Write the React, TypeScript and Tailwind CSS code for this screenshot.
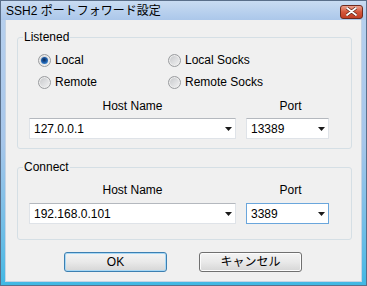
import React from 'react';

const font = "font-['Liberation_Sans','Noto_Sans_CJK_JP',sans-serif]";

const Radio: React.FC<{ label: string; checked?: boolean }> = ({ label, checked }) => (
  <div className="flex items-center h-[16px] gap-[4px]">
    <span className="w-[13px] h-[13px] rounded-full border border-[#9a9c9f] bg-gradient-to-br from-[#c4c6c8] via-[#dcdddf] to-[#f3f3f3] shadow-[inset_0_0_0_1px_#eeeeee] flex items-center justify-center">
      {checked && (
        <span className="w-[7px] h-[7px] rounded-full bg-[radial-gradient(circle_at_45%_40%,#0c2a52_0%,#1c5aa8_45%,#4aa2e8_100%)]" />
      )}
    </span>
    <span className="text-[12px] leading-[14px] text-black">{label}</span>
  </div>
);

const Arrow = () => (
  <svg width="7" height="4" viewBox="0 0 7 4" className="shrink-0">
    <path d="M0 0H7L3.5 4Z" fill="#1a1a1a" />
  </svg>
);

const Combo: React.FC<{ value: string; width: string; focused?: boolean }> = ({ value, width, focused }) => (
  <div
    className={`${width} h-[21px] flex items-center justify-between bg-white pl-[4px] pr-[3px] border ${
      focused ? 'border-[#6aa6dc]' : 'border-[#dfe3e8] border-t-[#b4b8be]'
    }`}
  >
    <span className="text-[12px] leading-[14px] text-black">{value}</span>
    <Arrow />
  </div>
);

const HostRow: React.FC<{ host: string; port: string; portFocused?: boolean }> = ({ host, port, portFocused }) => (
  <>
    <div className="flex pl-[11px] gap-[11px]">
      <div className="w-[207px] text-center text-[12px] leading-[14px]">Host Name</div>
      <div className="w-[83px] pl-[4px] text-center text-[12px] leading-[14px]">Port</div>
    </div>
    <div className="flex pl-[11px] gap-[10px]">
      <Combo value={host} width="w-[207px]" />
      <Combo value={port} width="w-[83px]" focused={portFocused} />
    </div>
  </>
);

export default function App() {
  return (
    <div
      className={`${font} w-[367px] h-[286px] flex flex-col border border-[#5a6f8a] bg-gradient-to-b from-[#b9d1ee] via-[#a6c6ea] to-[#3fb8e4] text-black`}
    >
      {/* Title bar */}
      <div className="h-[19px] flex items-center justify-between pl-[5px] pr-[3px] bg-gradient-to-b from-[#c9dcf2] to-[#abc7ea]">
        <span className="text-[12px] leading-[14px] mt-[1px]">SSH2 ポートフォワード設定</span>
        <div className="w-[23px] h-[14px] mt-[2px] rounded-[3px] border border-[#6e2a1e] bg-gradient-to-b from-[#eba08c] via-[#d4553a] to-[#c03f26] flex items-center justify-center">
          <svg width="11" height="9" viewBox="0 0 11 9">
            <path d="M1 1L10 8M10 1L1 8" stroke="#5a2015" strokeWidth="3.2" strokeLinecap="round" />
            <path d="M1 1L10 8M10 1L1 8" stroke="#ffffff" strokeWidth="1.8" strokeLinecap="round" />
          </svg>
        </div>
      </div>

      {/* Client area */}
      <div className="flex-1 mx-[4px] mb-[3px] bg-[#f0f0f0] border-l border-r border-b border-[#c5d3e3] flex flex-col">
        <fieldset className="mt-[10px] ml-[11px] w-[335px] border border-[#d5dfe5] rounded-[3px] pb-[9px]">
          <legend className="ml-[5px] px-[1px] text-[12px] leading-[14px]">Listened</legend>
          <div className="grid grid-cols-[130px_130px] pl-[20px] mt-[8px] gap-y-[6px]">
            <Radio label="Local" checked />
            <Radio label="Local Socks" />
            <Radio label="Remote" />
            <Radio label="Remote Socks" />
          </div>
          <div className="mt-[9px] flex flex-col gap-[5px]">
            <HostRow host="127.0.0.1" port="13389" />
          </div>
        </fieldset>

        <fieldset className="mt-[11px] ml-[11px] w-[335px] border border-[#d5dfe5] rounded-[3px] pb-[15px]">
          <legend className="ml-[5px] px-[1px] text-[12px] leading-[14px]">Connect</legend>
          <div className="mt-[9px] flex flex-col gap-[6px]">
            <HostRow host="192.168.0.101" port="3389" portFocused />
          </div>
        </fieldset>

        <div className="mt-[12px] flex justify-center gap-[32px] pr-[1px]">
          <button className="w-[103px] h-[20px] rounded-[3px] border border-[#3c7fb1] bg-gradient-to-b from-[#f4f4f4] via-[#e9e9e9] to-[#d6d6d6] shadow-[inset_0_0_0_1px_#a8d8f5] text-[12px] leading-[14px]">
            OK
          </button>
          <button className="w-[103px] h-[20px] rounded-[3px] border border-[#707070] bg-gradient-to-b from-[#f4f4f4] via-[#e9e9e9] to-[#d6d6d6] shadow-[inset_0_0_0_1px_#fcfcfc] text-[12px] leading-[14px]">
            キャンセル
          </button>
        </div>
      </div>
    </div>
  );
}
